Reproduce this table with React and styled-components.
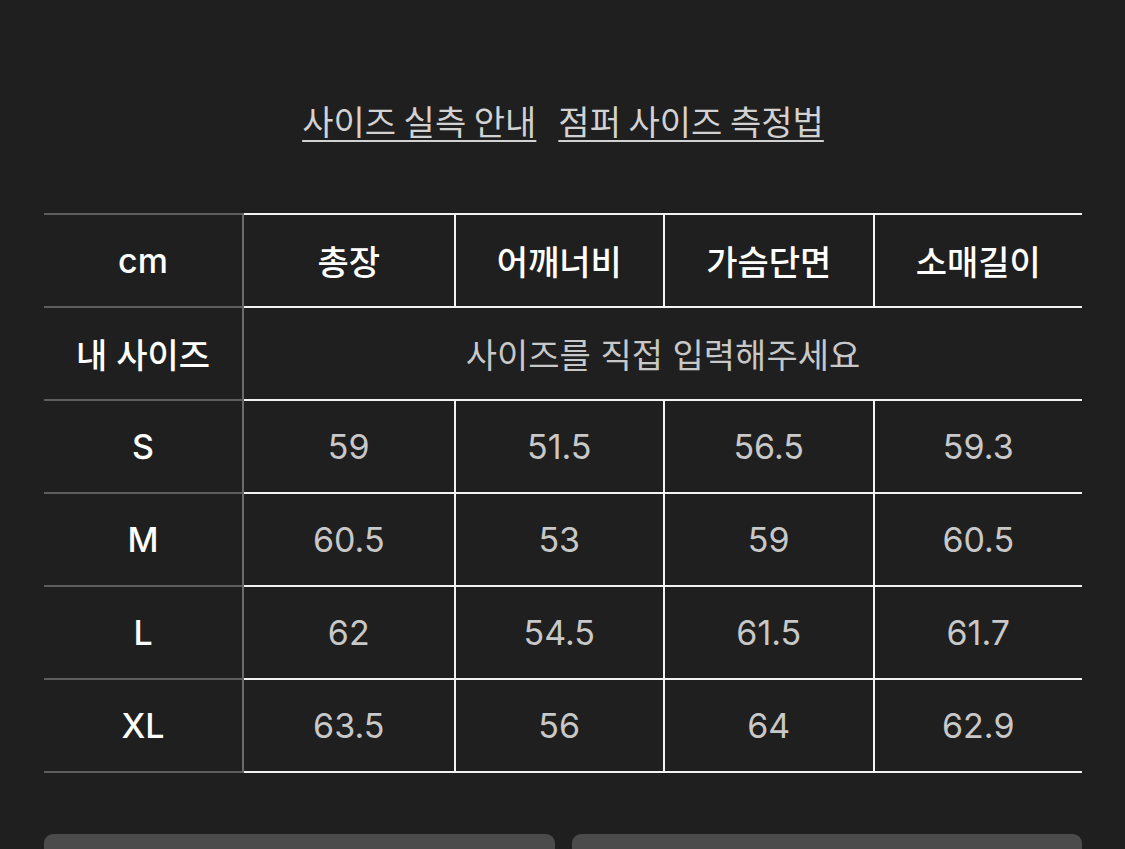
import React from "react";
import styled, { createGlobalStyle } from "styled-components";

const GlobalStyle = createGlobalStyle`
  html, body {
    margin: 0;
    padding: 0;
    background: #1f1f1f;
  }
  body {
    font-family: "Inter", "Noto Sans CJK KR", sans-serif;
  }
`;

const Page = styled.div`
  display: flex;
  flex-direction: column;
  padding: 0 43px 0 44px;
  height: 849px;
  overflow: hidden;
  box-sizing: border-box;
  background: #1f1f1f;

  & > * {
    flex-shrink: 0;
  }
`;

const Links = styled.div`
  display: flex;
  justify-content: center;
  align-items: flex-start;
  gap: 22px;
  padding-top: 98px;
  height: 213px;
  box-sizing: border-box;
`;

const GuideLink = styled.a`
  font-family: "Noto Sans CJK KR", sans-serif;
  font-size: 34px;
  line-height: 46px;
  color: #d2d2d2;
  text-decoration: underline;
  text-decoration-thickness: 2px;
  text-underline-offset: 5px;
  cursor: pointer;
`;

const Table = styled.div`
  display: flex;
  flex-direction: column;
`;

const Row = styled.div`
  display: grid;
  grid-template-columns: 200px repeat(4, 1fr);
  height: ${(p) => (p.top ? "95px" : "93px")};
`;

const LabelCell = styled.div`
  display: flex;
  align-items: center;
  justify-content: center;
  border-bottom: 2px solid #5e5e5e;
  border-top: ${(p) => (p.first ? "2px solid #5e5e5e" : "none")};
  border-right: 2px solid #6a6a6a;
  color: #ffffff;
  font-size: 34px;
  font-weight: 500;
`;

const DataCell = styled.div`
  display: flex;
  align-items: center;
  justify-content: center;
  grid-column: ${(p) => (p.span ? "2 / span 4" : "auto")};
  border-bottom: 2px solid #f2f2f2;
  border-top: ${(p) => (p.first ? "2px solid #f2f2f2" : "none")};
  color: ${(p) => (p.head ? "#ffffff" : "#c8c8c8")};
  font-size: 34px;
  font-weight: ${(p) => (p.head ? 500 : 400)};

  & + & {
    border-left: 2px solid #f2f2f2;
  }
`;

const Buttons = styled.div`
  display: grid;
  grid-template-columns: 1fr 1fr;
  gap: 17px;
  margin-top: 61px;
`;

const Button = styled.button`
  height: 64px;
  border: none;
  border-radius: 9px;
  background: #4b4b4b;
`;

const headers = ["총장", "어깨너비", "가슴단면", "소매길이"];

const sizes = [
  { name: "S", values: ["59", "51.5", "56.5", "59.3"] },
  { name: "M", values: ["60.5", "53", "59", "60.5"] },
  { name: "L", values: ["62", "54.5", "61.5", "61.7"] },
  { name: "XL", values: ["63.5", "56", "64", "62.9"] },
];

export default function App() {
  return (
    <>
      <GlobalStyle />
      <Page>
        <Links>
          <GuideLink>사이즈 실측 안내</GuideLink>
          <GuideLink>점퍼 사이즈 측정법</GuideLink>
        </Links>
        <Table>
          <Row top>
            <LabelCell first>cm</LabelCell>
            {headers.map((h) => (
              <DataCell key={h} first head>
                {h}
              </DataCell>
            ))}
          </Row>
          <Row>
            <LabelCell>내 사이즈</LabelCell>
            <DataCell span>사이즈를 직접 입력해주세요</DataCell>
          </Row>
          {sizes.map((s) => (
            <Row key={s.name}>
              <LabelCell>{s.name}</LabelCell>
              {s.values.map((v, i) => (
                <DataCell key={i}>{v}</DataCell>
              ))}
            </Row>
          ))}
        </Table>
        <Buttons>
          <Button />
          <Button />
        </Buttons>
      </Page>
    </>
  );
}
